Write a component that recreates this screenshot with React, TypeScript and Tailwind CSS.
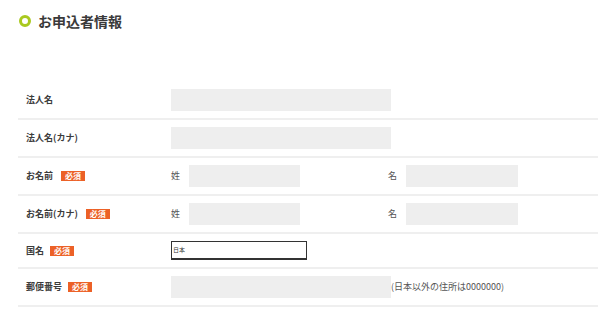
import React from "react";

const font = { fontFamily: '"Noto Sans CJK JP", "Noto Sans", sans-serif' };

function Badge() {
  return (
    <span className="flex h-[10px] w-[24px] items-center justify-center bg-[#ec6127] text-[8px] font-bold leading-none text-white">
      必須
    </span>
  );
}

function Input({ w }: { w: string }) {
  return <div className={`${w} h-[22px] bg-[#eeeeee]`} />;
}

function Row({
  label,
  badge,
  badgeGap,
  children,
}: {
  label: string;
  badge?: boolean;
  badgeGap?: string;
  children: React.ReactNode;
}) {
  return (
    <div className="flex items-center border-b-2 border-[#efefef] py-[7px]">
      <div className="flex h-[10px] w-[153px] shrink-0 items-center pl-[8px]">
        <span className="block text-[9px] font-bold leading-[10px] text-[#3c3c3c]">{label}</span>
        {badge && <div className={`flex ${badgeGap}`}><Badge /></div>}
      </div>
      <div className="flex items-center">{children}</div>
    </div>
  );
}

function Split() {
  return (
    <div className="flex items-center">
      <div className="flex w-[217px] items-center">
        <span className="block w-[18px] text-[9px] leading-[10px] text-[#555555]">姓</span>
        <Input w="w-[111px]" />
      </div>
      <div className="flex items-center">
        <span className="block w-[18px] text-[9px] leading-[10px] text-[#555555]">名</span>
        <Input w="w-[112px]" />
      </div>
    </div>
  );
}

export default function App() {
  return (
    <div className="h-[312px] w-[600px] overflow-hidden bg-white" style={font}>
      <div className="flex h-[14px] items-center pl-[19px] mt-[14px]">
        <span className="box-border h-[12px] w-[12px] rounded-full border-[3px] border-[#a9c91f]" />
        <span className="ml-[7px] block text-[14px] font-bold leading-[14px] text-[#3a3a3a]">
          お申込者情報
        </span>
      </div>
      <div className="ml-[18px] mt-[54px] w-[580px]">
        <Row label="法人名">
          <Input w="w-[220px]" />
        </Row>
        <Row label="法人名(カナ)">
          <Input w="w-[220px]" />
        </Row>
        <Row label="お名前" badge badgeGap="ml-[8px]">
          <Split />
        </Row>
        <Row label="お名前(カナ)" badge badgeGap="ml-[8px]">
          <Split />
        </Row>
        <Row label="国名" badge badgeGap="ml-[6px]">
          <div className="flex h-[19px] w-[136px] items-center border border-b-2 border-[#333333] pl-[1px]">
            <span className="block text-[6px] leading-none text-[#333333]">日本</span>
          </div>
        </Row>
        <Row label="郵便番号" badge badgeGap="ml-[6px]">
          <Input w="w-[220px]" />
          <span className="block text-[9px] leading-[10px] text-[#555555]">(日本以外の住所は0000000)</span>
        </Row>
      </div>
    </div>
  );
}
